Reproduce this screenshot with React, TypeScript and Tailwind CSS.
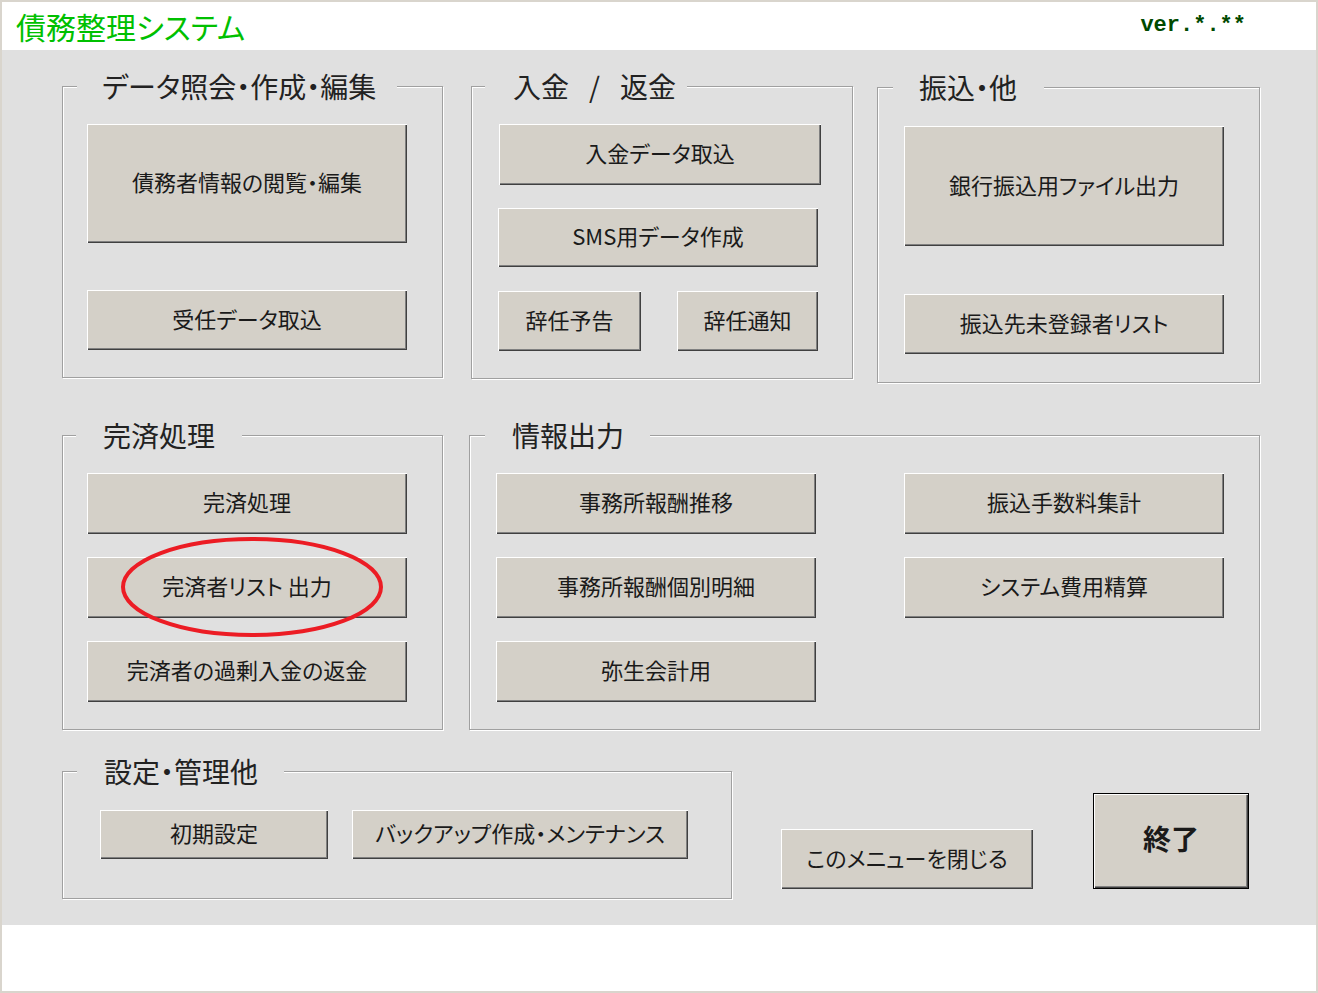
import React from 'react';

type BtnProps = {
  className: string;
  children: React.ReactNode;
  big?: boolean;
};

const Btn: React.FC<BtnProps> = ({ className, children, big }) => (
  <div
    className={`${className} flex shrink-0 items-center justify-center bg-[#d4d0c8] text-[#1a1a1a] leading-none whitespace-nowrap ${
      big
        ? 'border border-black text-[28px] font-bold pb-[6px] shadow-[inset_1px_1px_0_#fff,inset_-1px_-1px_0_#404040,inset_-2px_-2px_0_#808080]'
        : 'text-[22px] pb-[5px] shadow-[inset_1px_1px_0_#fff,inset_-1px_-1px_0_#404040,inset_-2px_-2px_0_#808080]'
    }`}
  >
    {children}
  </div>
);

type GroupProps = {
  className: string;
  label: React.ReactNode;
  labelClass: string;
  children: React.ReactNode;
};

const Group: React.FC<GroupProps> = ({ className, label, labelClass, children }) => (
  <div
    className={`${className} shrink-0 flex flex-col border border-[#a0a0a0] shadow-[inset_1px_1px_0_#fff,1px_1px_0_#fff]`}
  >
    <div className={`${labelClass} -mt-[16px] h-[30px] bg-[#e0e0e0] text-[28px] leading-[30px] text-[#222] whitespace-nowrap`}>
      {label}
    </div>
    {children}
  </div>
);

export default function App() {
  return (
    <div className="relative w-[1318px] h-[993px] border-2 border-[#d9d5cd] bg-white flex flex-col font-['Noto_Sans_CJK_JP',sans-serif] [font-feature-settings:'palt']">
      {/* header */}
      <div className="h-[48px] shrink-0 flex items-center justify-between pl-[14px] pr-[70px]">
        <div className="text-[30px] leading-none text-[#00c000]">債務整理システム</div>
        <div className="font-['Liberation_Mono',monospace] font-bold text-[22px] leading-none text-[#004a00]">ver.*.**</div>
      </div>

      {/* main panel */}
      <div className="h-[875px] shrink-0 bg-[#e0e0e0] pl-[60px] pt-[36px] flex flex-col">
        {/* row 1 */}
        <div className="h-[349px] shrink-0 flex items-start">
          <Group className="w-[381px] h-[292px]" label="データ照会・作成・編集" labelClass="ml-[14px] w-[320px] pl-[25px]">
            <div className="flex flex-col pl-[24px]">
              <Btn className="mt-[23px] w-[320px] h-[119px]">債務者情報の閲覧・編集</Btn>
              <Btn className="mt-[47px] w-[320px] h-[60px]">受任データ取込</Btn>
            </div>
          </Group>

          <Group
            className="ml-[28px] w-[382px] h-[293px]"
            label={
              <>
                入金<span className="mx-[20px]">/</span>返金
              </>
            }
            labelClass="ml-[13px] w-[202px] pl-[28px]"
          >
            <div className="flex flex-col pl-[26px]">
              <Btn className="mt-[23px] ml-[1px] w-[322px] h-[61px]">入金データ取込</Btn>
              <Btn className="mt-[23px] w-[320px] h-[59px]">SMS用データ作成</Btn>
              <div className="mt-[24px] flex">
                <Btn className="w-[143px] h-[60px]">辞任予告</Btn>
                <Btn className="ml-[36px] w-[141px] h-[60px]">辞任通知</Btn>
              </div>
            </div>
          </Group>

          <Group className="ml-[24px] mt-[1px] w-[383px] h-[296px]" label="振込・他" labelClass="ml-[15px] w-[151px] pl-[26px]">
            <div className="flex flex-col pl-[26px]">
              <Btn className="mt-[24px] w-[320px] h-[120px]">銀行振込用ファイル出力</Btn>
              <Btn className="mt-[48px] w-[320px] h-[60px]">振込先未登録者リスト</Btn>
            </div>
          </Group>
        </div>

        {/* row 2 */}
        <div className="h-[336px] shrink-0 flex items-start">
          <Group className="w-[381px] h-[295px]" label="完済処理" labelClass="ml-[13px] w-[166px] pl-[27px]">
            <div className="flex flex-col pl-[24px]">
              <Btn className="mt-[23px] w-[320px] h-[61px]">完済処理</Btn>
              <Btn className="mt-[23px] w-[320px] h-[61px]">完済者リスト 出力</Btn>
              <Btn className="mt-[23px] w-[320px] h-[61px]">完済者の過剰入金の返金</Btn>
            </div>
          </Group>

          <Group className="ml-[26px] w-[791px] h-[295px]" label="情報出力" labelClass="ml-[15px] w-[165px] pl-[27px]">
            <div className="grid grid-cols-[320px_320px] gap-x-[88px] gap-y-[23px] pl-[26px] pt-[23px]">
              <Btn className="h-[61px]">事務所報酬推移</Btn>
              <Btn className="h-[61px]">振込手数料集計</Btn>
              <Btn className="h-[61px]">事務所報酬個別明細</Btn>
              <Btn className="h-[61px]">システム費用精算</Btn>
              <Btn className="h-[61px]">弥生会計用</Btn>
            </div>
          </Group>
        </div>

        {/* row 3 */}
        <div className="flex items-start">
          <Group className="w-[670px] h-[128px]" label="設定・管理他" labelClass="ml-[14px] w-[207px] pl-[27px]">
            <div className="flex mt-[24px] pl-[37px]">
              <Btn className="w-[228px] h-[49px]">初期設定</Btn>
              <Btn className="ml-[24px] w-[336px] h-[49px]">バックアップ作成・メンテナンス</Btn>
            </div>
          </Group>
          <Btn className="ml-[49px] mt-[58px] w-[252px] h-[60px]">このメニューを閉じる</Btn>
          <Btn className="ml-[60px] mt-[22px] w-[156px] h-[96px]" big>
            終了
          </Btn>
        </div>
      </div>

      {/* red annotation ring */}
      <svg className="absolute left-[118px] top-[533px] w-[264px] h-[104px] pointer-events-none" viewBox="0 0 264 104">
        <ellipse cx="132" cy="52" rx="129" ry="48" fill="none" stroke="#ec1c24" strokeWidth="4" />
      </svg>
    </div>
  );
}
